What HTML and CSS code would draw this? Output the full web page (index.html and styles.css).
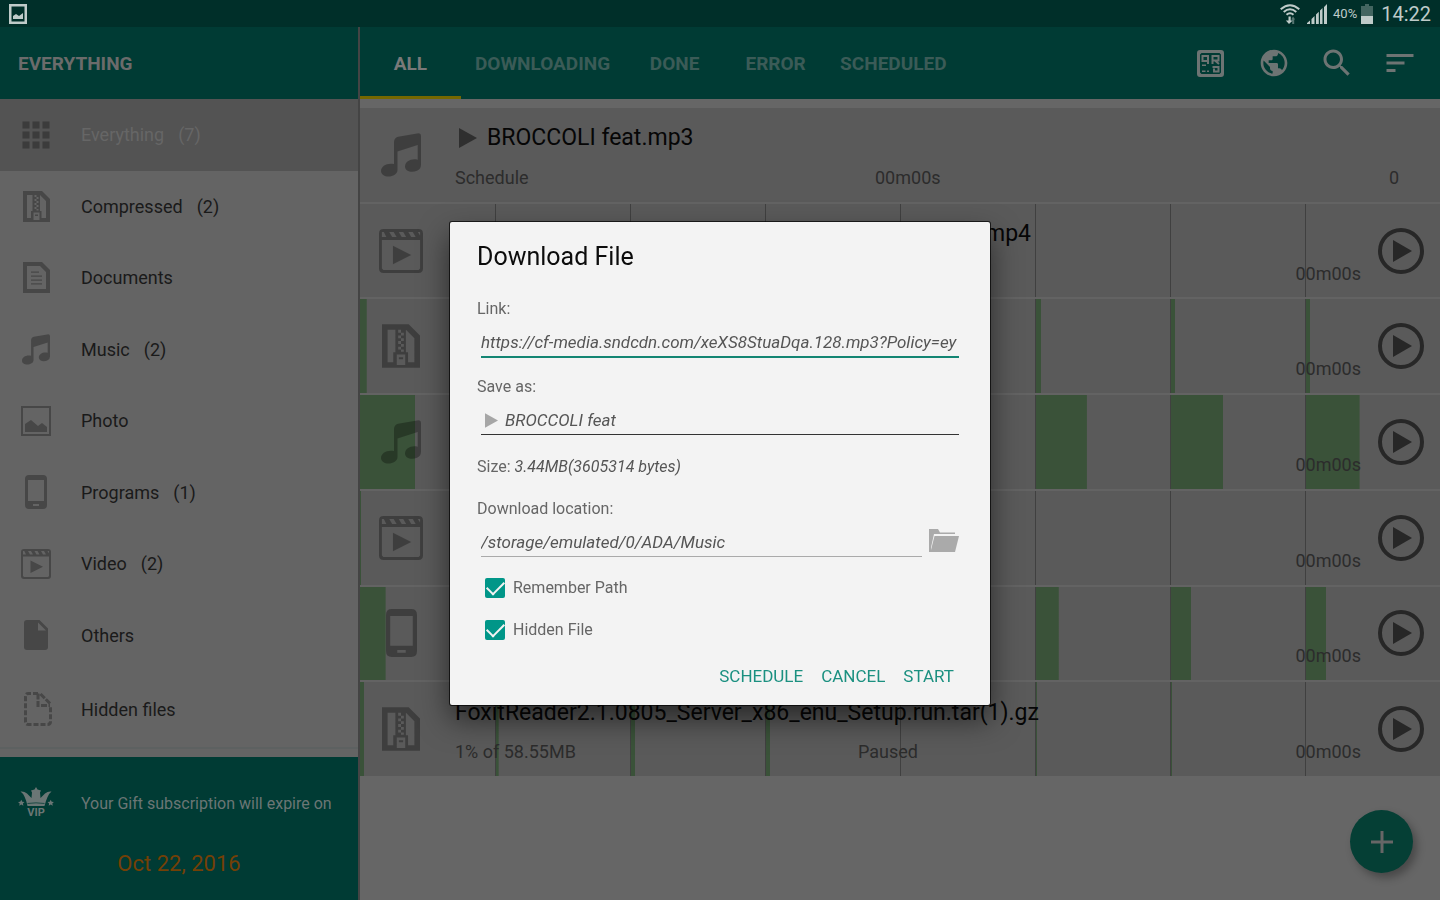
FILE: index.html
```html
<!DOCTYPE html>
<html lang="en">
<head>
<meta charset="utf-8">
<title>Download manager</title>
<link rel="stylesheet" href="styles.css">
</head>
<body>
<svg class="sprite" aria-hidden="true">
  <symbol id="grid" viewBox="0 0 36 36"><path d="M4.500 4.500h7v7h-7zM14.500 4.500h7v7h-7zM24.500 4.500h7v7h-7zM4.500 14.500h7v7h-7zM14.500 14.500h7v7h-7zM24.500 14.500h7v7h-7zM4.500 24.500h7v7h-7zM14.500 24.500h7v7h-7zM24.500 24.500h7v7h-7z"/></symbol>
  <symbol id="zip" viewBox="0 0 27 31"><path fill-rule="evenodd" d="M0 0h19l8 8v23H0zM4 4v23h4v-7h1.500V4zM17 4v16h1.500v7h4.500V10l-6-6zM10.500 21.500V29h6v-7.500zM12 23.500h3v1.500h-3zM11.500 4h2v2h-2zM13.500 6h2v2h-2zM11.500 8h2v2h-2zM13.500 10h2v2h-2zM11.500 12h2v2h-2zM13.500 14h2v2h-2zM11.500 16h2v2h-2zM13.500 18h2v1.500h-2z"/></symbol>
  <symbol id="doc" viewBox="0 0 27 31"><path fill-rule="evenodd" d="M0 0h19l8 8v23H0zM4 4v23h19V10l-6-6z"/><path d="M8 9.500h8v1.300H8zM8 13.500h11v1.300H8zM8 17.500h11v1.300H8zM8 21.300h11v1.300H8z"/></symbol>
  <symbol id="note" viewBox="0 0 40 44"><path fill-rule="evenodd" d="M13 9q0-4 4-5.200L36 .4q4-.8 4 2.600V32q0 4-4 5.800c-5 2.200-12 .8-12-4.200 0-5.300 6.500-8.500 12.700-6.800V12L16.500 18.500v18.500c0 4-4.500 6.500-9 6.500-4 0-7.500-2-7.500-5.500 0-5 6-8.500 13-7z"/></symbol>
  <symbol id="photo" viewBox="0 0 30 30"><path fill-rule="evenodd" d="M0 0h30v30H0zM2 2v26h26V2z"/><path d="M4 26v-8l6-4 7 6 4-3 5 4v5z"/></symbol>
  <symbol id="phone" viewBox="0 0 22 34"><path fill-rule="evenodd" d="M4 0h14q4 0 4 4v26q0 4-4 4H4q-4 0-4-4V4q0-4 4-4zM3 5v21h16V5zM8 29v2h6v-2z"/></symbol>
  <symbol id="video" viewBox="0 0 30 30"><path fill-rule="evenodd" d="M3 0h24q3 0 3 3v24q0 3-3 3H3q-3 0-3-3V3q0-3 3-3zM2 7.500V27l1 1h24l1-1V7.500zM2 2v3.500h3L3.300 2zM7 2l2 3.500h3L10 2zM13.500 2l2 3.500h3L16.500 2zM20 2l2 3.500h3L23 2zM26.500 2l1.500 2.500V2z"/><path d="M9.500 11.500 22 17.700 9.500 24z"/></symbol>
  <symbol id="file" viewBox="0 0 24 30"><path fill-rule="evenodd" d="M3 0h12.500L24 8.500V27q0 3-3 3H3q-3 0-3-3V3q0-3 3-3zM14 2.500v8h8z"/></symbol>
  <symbol id="hidden" viewBox="0 0 28 34"><g fill="none" stroke="currentColor" stroke-width="3"><path stroke-dasharray="5 2" d="M14 1.500H4.500q-3 0-3 3V29.500q0 3 3 3h19q3 0 3-3V14"/><path stroke-dasharray="6 1.500" d="M14 1.500v12h12M16.500 2l9.500 9.500"/></g></symbol>
  <symbol id="play" viewBox="0 0 46 46"><circle cx="23" cy="23" r="21" fill="none" stroke="currentColor" stroke-width="4"/><path d="M15 12v22l19-11z"/></symbol>
  <symbol id="tri" viewBox="0 0 18 20"><path d="M0 0 18 10 0 20z"/></symbol>
</svg>

<div class="app">
  <header class="status">
    <svg class="status-shot" viewBox="0 0 18 20"><path fill-rule="evenodd" d="M0 0h18v20H0zM2.500 2.500v15h13v-15z"/><path d="M4 15v-3l3-2 3 2 4-3v6z"/></svg>
    <div class="status-right">
      <svg class="wifi" viewBox="0 0 20 20"><g fill="none" stroke="currentColor" stroke-width="2"><path d="M.7 5.200q9.300-8 18.600 0M3.700 8q6.300-5.500 12.600 0M6.500 10.800q3.500-3 7 0"/></g><path d="M8.500 12.500h2.200v4h2L9 20l-3.200-3.500h2.700z"/><path opacity=".45" d="M12.200 20v-4.500h-1L13 12.500l2.200 3h-1V20z"/></svg>
      <svg class="signal" viewBox="0 0 20 20"><path d="M0 20v-1l3-2.500V20zM4.500 20v-5l3-3v8zM9 20V10.500l2.800-2.700V20zM13 20V6.500l2.500-2.500v16zM17 20V3l3-3v20z"/></svg>
      <span class="pct">40%</span>
      <svg class="battery" viewBox="0 0 12 20"><path opacity=".35" d="M4 0h4v2h4v10H0V2h4z"/><path d="M0 12h12v8H0z"/></svg>
      <span class="clock">14:22</span>
    </div>
  </header>

  <div class="columns">
    <aside class="side">
      <h1 class="side-head">EVERYTHING</h1>
      <nav class="nav">
        <a class="item item-on" href="#"><span class="ico"><svg width="36" height="36"><use href="#grid"/></svg></span>Everything<span>(7)</span></a>
        <a class="item" href="#"><span class="ico"><svg width="27" height="31"><use href="#zip"/></svg></span>Compressed<span>(2)</span></a>
        <a class="item" href="#"><span class="ico"><svg width="27" height="31"><use href="#doc"/></svg></span>Documents</a>
        <a class="item" href="#"><span class="ico"><svg width="28" height="31"><use href="#note"/></svg></span>Music<span>(2)</span></a>
        <a class="item" href="#"><span class="ico"><svg width="30" height="30"><use href="#photo"/></svg></span>Photo</a>
        <a class="item" href="#"><span class="ico"><svg width="22" height="34"><use href="#phone"/></svg></span>Programs<span>(1)</span></a>
        <a class="item" href="#"><span class="ico"><svg width="30" height="30"><use href="#video"/></svg></span>Video<span>(2)</span></a>
        <a class="item" href="#"><span class="ico"><svg width="24" height="30"><use href="#file"/></svg></span>Others</a>
        <a class="item item-last" href="#"><span class="ico ico-end"><svg width="28" height="34"><use href="#hidden"/></svg></span>Hidden files</a>
      </nav>
      <section class="vip">
        <p class="vip-line"><svg class="crown" viewBox="0 0 36 34"><path d="M2.500 4.500Q6 4 9 6.500L13.500 11 14 5.500 13 3.500l3.500-1L18 0l1.500 2.500 3.500 1-1 2L22.500 11 27 6.500q3-2.500 6.500-2-4 3-7 14.500h-17Q7 7.500 2.500 4.500zM3.300 12.800l1 2 2.200.2-1.600 1.500.5 2.200-2.100-1.100-2 1.100.4-2.200L0 15l2.200-.2zM32.700 12.800l1 2 2.200.2-1.600 1.500.5 2.200-2.100-1.100-2 1.100.4-2.200-1.600-1.500 2.200-.2z"/><path class="crown-gap" d="M9.500 16q8.500-1 17 0v.8q-8.500-1-17 0z"/><text x="18" y="29" text-anchor="middle">VIP</text></svg>Your Gift subscription will expire on</p>
        <p class="vip-date">Oct 22, 2016</p>
      </section>
    </aside>

    <main class="main">
      <div class="bar">
        <div class="tabs" role="tablist">
          <button class="tab tab-on" role="tab" aria-selected="true">ALL</button>
          <button class="tab" role="tab">DOWNLOADING</button>
          <button class="tab" role="tab">DONE</button>
          <button class="tab" role="tab">ERROR</button>
          <button class="tab" role="tab">SCHEDULED</button>
        </div>
        <div class="tools">
          <button class="tool" aria-label="QR code"><svg width="27" height="27" viewBox="0 0 27 27"><path fill-rule="evenodd" d="M3 0h21q3 0 3 3v21q0 3-3 3H3q-3 0-3-3V3q0-3 3-3zM4.500 3 3 4.500v18L4.500 24h18l1.500-1.500v-18L22.500 3z"/><g fill="none" stroke="currentColor" stroke-width="2"><path d="M11 14V6H5.500v5H11M15.500 14V6h6v4.500h-6M18.500 11l3.500 3M15.500 17h6v4.500h-4.500v-3"/></g><path d="M5 14.500h4V16H5zM5 20.500h3.500V22H5zM10 20.500h2V22h-2z"/></svg></button>
          <button class="tool" aria-label="Browser"><svg width="32" height="32" viewBox="0 0 24 24"><path d="M12 2C6.480 2 2 6.480 2 12s4.480 10 10 10 10-4.480 10-10S17.520 2 12 2zm-1 17.930c-3.950-.49-7-3.850-7-7.930 0-.62.08-1.210.21-1.790L9 15v1c0 1.100.9 2 2 2v1.930zm6.900-2.540c-.26-.81-1-1.390-1.900-1.390h-1v-3c0-.55-.45-1-1-1H8v-2h2c.55 0 1-.45 1-1V7h2c1.100 0 2-.9 2-2v-.41c2.930 1.190 5 4.060 5 7.410 0 2.080-.8 3.970-2.100 5.390z"/></svg></button>
          <button class="tool" aria-label="Search"><svg width="36" height="36" viewBox="0 0 24 24"><path d="M15.500 14h-.79l-.28-.27C15.410 12.590 16 11.110 16 9.500 16 5.910 13.090 3 9.500 3S3 5.910 3 9.500 5.910 16 9.500 16c1.610 0 3.090-.59 4.230-1.570l.27.28v.79l5 4.990L20.490 19l-4.990-5zm-6 0C7.010 14 5 11.990 5 9.500S7.010 5 9.500 5 14 7.010 14 9.500 11.990 14 9.500 14z"/></svg></button>
          <button class="tool" aria-label="Sort"><svg width="36" height="36" viewBox="0 0 24 24"><path d="M3 18h6v-2H3v2zM3 6v2h18V6H3zm0 7h12v-2H3v2z"/></svg></button>
        </div>
      </div>

      <div class="list">
        <article class="row">
          <span class="type"><svg width="40" height="44"><use href="#note"/></svg></span>
          <div class="info">
            <h2 class="name"><svg class="name-tri" width="18" height="20"><use href="#tri"/></svg>BROCCOLI feat.mp3</h2>
            <p class="meta"><span>Schedule</span><span>00m00s</span></p>
          </div>
          <span class="count">0</span>
        </article>
        <article class="row">
          <div class="parts"><i></i><i></i><i></i><i></i><i></i><i></i><i></i><i></i></div>
          <span class="type"><svg width="44" height="44"><use href="#video"/></svg></span>
          <div class="info">
            <h2 class="name name-end">mp4</h2>
            <p class="meta"><span class="left">00m00s</span></p>
          </div>
          <button class="go" aria-label="Start"><svg width="46" height="46"><use href="#play"/></svg></button>
        </article>
        <article class="row">
          <div class="parts"><i style="--w:5%"></i><i></i><i></i><i></i><i></i><i style="--w:4%"></i><i style="--w:3%"></i><i style="--w:3%"></i></div>
          <span class="type"><svg width="38" height="44"><use href="#zip"/></svg></span>
          <div class="info">
            <h2 class="name"></h2>
            <p class="meta"><span class="left">00m00s</span></p>
          </div>
          <button class="go" aria-label="Start"><svg width="46" height="46"><use href="#play"/></svg></button>
        </article>
        <article class="row">
          <div class="parts"><i style="--w:41%"></i><i></i><i></i><i></i><i></i><i style="--w:38%"></i><i style="--w:39%"></i><i style="--w:40%"></i></div>
          <span class="type"><svg width="40" height="44"><use href="#note"/></svg></span>
          <div class="info">
            <h2 class="name"></h2>
            <p class="meta"><span class="left">00m00s</span></p>
          </div>
          <button class="go" aria-label="Start"><svg width="46" height="46"><use href="#play"/></svg></button>
        </article>
        <article class="row">
          <div class="parts"><i style="--w:1%"></i><i></i><i></i><i></i><i></i><i></i><i></i><i></i></div>
          <span class="type"><svg width="44" height="44"><use href="#video"/></svg></span>
          <div class="info">
            <h2 class="name"></h2>
            <p class="meta"><span class="left">00m00s</span></p>
          </div>
          <button class="go" aria-label="Start"><svg width="46" height="46"><use href="#play"/></svg></button>
        </article>
        <article class="row">
          <div class="parts"><i style="--w:19%"></i><i></i><i></i><i></i><i></i><i style="--w:17%"></i><i style="--w:15%"></i><i style="--w:15%"></i></div>
          <span class="type"><svg width="31" height="48"><use href="#phone"/></svg></span>
          <div class="info">
            <h2 class="name"></h2>
            <p class="meta"><span class="left">00m00s</span></p>
          </div>
          <button class="go" aria-label="Start"><svg width="46" height="46"><use href="#play"/></svg></button>
        </article>
        <article class="row">
          <div class="parts"><i style="--w:3%"></i><i style="--w:2%"></i><i style="--w:3%"></i><i style="--w:3%"></i><i></i><i style="--w:1%"></i><i style="--w:1%"></i><i></i></div>
          <span class="type"><svg width="38" height="44"><use href="#zip"/></svg></span>
          <div class="info">
            <h2 class="name">FoxitReader2.1.0805_Server_x86_enu_Setup.run.tar(1).gz</h2>
            <p class="meta meta-paused"><span>1% of 58.55MB</span><span>Paused</span><span class="left">00m00s</span></p>
          </div>
          <button class="go" aria-label="Start"><svg width="46" height="46"><use href="#play"/></svg></button>
        </article>
      </div>
      <button class="fab" aria-label="Add download"><svg width="22" height="22" viewBox="0 0 22 22"><path d="M9.500 0h3v9.500H22v3h-9.500V22h-3v-9.500H0v-3h9.500z"/></svg></button>
    </main>
  </div>
</div>

<div class="overlay">
  <form class="dialog" role="dialog" aria-labelledby="dlg-title">
    <h2 class="dlg-title" id="dlg-title">Download File</h2>
    <label class="lbl" for="link">Link:</label>
    <div class="field field-focus"><input id="link" type="text" value="https://cf-media.sndcdn.com/xeXS8StuaDqa.128.mp3?Policy=ey"></div>
    <label class="lbl lbl-save" for="save">Save as:</label>
    <div class="field field-dark"><svg class="field-tri" width="13" height="15"><use href="#tri"/></svg><input id="save" type="text" value="BROCCOLI feat"></div>
    <p class="size">Size: <em>3.44MB(3605314 bytes)</em></p>
    <label class="lbl" for="path">Download location:</label>
    <div class="path">
      <div class="field"><input id="path" type="text" value="/storage/emulated/0/ADA/Music"></div>
      <button type="button" class="browse" aria-label="Choose folder"><svg width="32" height="24" viewBox="0 0 32 24"><path d="M1 0h9l2 3.500h15V5H6L3 18.500V23H1z"/><path d="M6.500 7H31l-4 16H2.500z"/></svg></button>
    </div>
    <label class="check"><input type="checkbox" checked>Remember Path</label>
    <label class="check"><input type="checkbox" checked>Hidden File</label>
    <div class="actions">
      <button type="button">SCHEDULE</button>
      <button type="button">CANCEL</button>
      <button type="button">START</button>
    </div>
  </form>
</div>
</body>
</html>
```

FILE: styles.css
```css
* { box-sizing: border-box; margin: 0; padding: 0; }
body { font-family: Roboto, "Liberation Sans", sans-serif; background: #666; color: #1a1a1a; }
button, input { font: inherit; color: inherit; background: none; border: 0; outline: 0; }
svg { display: block; flex: none; fill: currentColor; }
.sprite { position: absolute; width: 0; height: 0; }
.app { display: flex; flex-direction: column; min-height: 100vh; }

.status { height: 27px; padding: 0 9px; display: flex; align-items: center; justify-content: space-between; background: #002f29; color: #bfcbc9; }
.status-shot { width: 18px; height: 20px; }
.status-right { display: flex; align-items: center; }
.wifi { width: 20px; height: 20px; margin-right: 7px; }
.signal { width: 20px; height: 20px; margin-right: 6px; }
.pct { font-size: 13px; margin-right: 4px; }
.battery { width: 12px; height: 20px; margin-right: 8px; }
.clock { font-size: 20px; line-height: 28px; }

.columns { flex: 1; display: flex; }
.side { flex: 0 0 360px; border-right: 2px solid #444; display: flex; flex-direction: column; background: #646464; }
.side-head { height: 72px; padding-left: 18px; background: #003b34; color: #6b6b6b; font-size: 19px; line-height: 74px; font-weight: 700; }
.nav { flex: 1; display: flex; flex-direction: column; border-bottom: 2px solid #5d6161; margin-bottom: 8px; }
.item { flex: 1; display: flex; align-items: center; gap: 14px; padding-left: 18px; color: #1a1a1a; font-size: 18px; text-decoration: none; }
.item-on { background: #535353; color: #666; }
.item-on .ico { color: #3b3b3b; }
.item-last { flex: 0 0 76px; }
.ico { width: 36px; margin-right: 13px; display: flex; justify-content: center; color: #474747; }
.ico-end { padding-left: 4px; }
.vip { height: 143px; background: #003b34; }
.vip-line { height: 93px; padding-left: 18px; display: flex; align-items: center; gap: 27px; color: #6b7675; font-size: 16px; }
.crown { width: 36px; height: 34px; }
.crown-gap { fill: #003b34; }
.crown text { font-size: 11px; font-weight: 700; }
.vip-date { color: #744006; font-size: 22px; line-height: 28px; text-align: center; }

.main { flex: 1; min-width: 0; display: flex; flex-direction: column; background: #666; }
.bar { height: 72px; display: flex; justify-content: space-between; background: #003b34; }
.tabs, .tools { display: flex; }
.tab { min-width: 101px; padding: 4px 14px 0; border-bottom: 3px solid transparent; color: #3b5b57; font-size: 19px; font-weight: 700; }
.tab-on { color: #797979; border-color: #746700; }
.tools { padding-right: 9px; }
.tool { width: 63px; display: flex; align-items: center; justify-content: center; color: #6d7473; }

.list { flex: 1; display: flex; flex-direction: column; margin: 9px 0 124px; }
.row { flex: 1; position: relative; display: flex; align-items: center; background: #5a5a5a; border-bottom: 2px solid #636363; padding-right: 16px; }
.row:last-child { border-bottom: 0; }
.row > * { position: relative; }
.row > .parts { position: absolute; inset: 0; display: grid; grid-template-columns: repeat(8, 1fr); }
.parts i { border-left: 1px solid #404040; background: linear-gradient(#3a5239, #3a5239) no-repeat 0 0 / var(--w, 0) 100%; }
.parts i:first-child { border-left: 0; }
.type { width: 82px; display: flex; justify-content: center; color: rgba(0, 0, 0, .3); }
.info { flex: 1; min-width: 0; margin: 0 17px 0 13px; padding-top: 2px; }
.name { height: 28px; margin-bottom: 16px; display: flex; align-items: center; gap: 10px; color: #060606; font-size: 23px; font-weight: 400; white-space: nowrap; }
.name-end { max-width: 576px; justify-content: flex-end; }
.name-tri { margin-left: 4px; color: #2f2f2f; }
.meta { display: grid; grid-template-columns: 420px auto 1fr; color: #2c2c2c; font-size: 18px; line-height: 20px; }
.meta-paused { grid-template-columns: 403px auto 1fr; }
.left { grid-column: 3; text-align: right; }
.count { align-self: flex-end; width: 46px; padding: 0 25px 14px 0; text-align: right; color: #2c2c2c; font-size: 18px; line-height: 20px; }
.go { color: #272727; }
.fab { position: fixed; right: 27px; bottom: 27px; width: 63px; height: 63px; border-radius: 50%; background: #053f35; color: #666; display: flex; align-items: center; justify-content: center; box-shadow: 4px 5px 8px rgba(0, 0, 0, .3); }

.overlay { position: fixed; inset: 27px 0 0; display: flex; align-items: center; justify-content: center; }
.dialog { width: 540px; padding: 21px 27px 11px; border-radius: 2px; background: #f3f3f3; color: #666; font-size: 16px; line-height: 20px; box-shadow: 0 0 0 1px rgba(0, 0, 0, .7), 0 14px 30px rgba(0, 0, 0, .55); }
.dlg-title { margin-bottom: 28px; color: #0c0c0c; font-size: 25px; line-height: 28px; font-weight: 400; }
.lbl { display: block; margin-bottom: 9px; }
.lbl-save { margin-top: 19px; }
.field { margin: 0 4px; display: flex; align-items: center; border-bottom: 1px solid #aaa; color: #555; }
.field-focus { border-bottom: 2px solid #138573; }
.field-dark { border-color: #333; }
.field input { flex: 1; min-width: 0; height: 28px; font-size: 17px; font-style: italic; }
.field-focus input { margin-right: -4px; }
.field-tri { margin: 0 7px 0 4px; color: #a6a6a6; }
.size { margin: 22px 0; }
.size em { color: #555; }
.path { display: flex; align-items: center; margin: 0 3px 20px 0; }
.path .field { flex: 1; margin-right: 6px; }
.browse { color: #aaa; padding-bottom: 4px; }
.check { display: flex; align-items: center; width: max-content; height: 22px; margin: 0 0 20px 8px; gap: 8px; }
.check input { appearance: none; width: 20px; height: 20px; border-radius: 2px; background: #009688; display: grid; place-items: center; }
.check input:checked::before { content: ""; width: 15px; height: 8px; margin-bottom: 4px; border: solid #f3f3f3; border-width: 0 0 2px 2px; transform: rotate(-45deg); }
.actions { display: flex; justify-content: flex-end; margin-top: -3px; color: #1b9080; }
.actions button { height: 36px; padding: 0 9px; font-size: 17px; }
```
